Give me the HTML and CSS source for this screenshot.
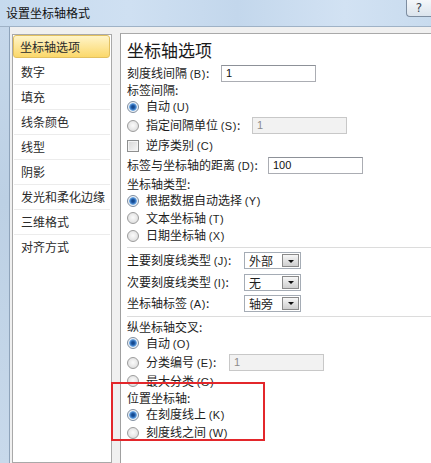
FILE: index.html
```html
<!DOCTYPE html>
<html>
<head>
<meta charset="utf-8">
<title>设置坐标轴格式</title>
<link rel="stylesheet" href="styles.css">
</head>
<body>
<div class="win">
  <div class="titlebar">
    <span class="title">设置坐标轴格式</span>
    <span class="help">?</span>
  </div>
  <div class="main">
    <div class="frame"></div>
    <ul class="nav">
      <li class="item sel">坐标轴选项</li>
      <li class="item">数字</li>
      <li class="item">填充</li>
      <li class="item">线条颜色</li>
      <li class="item">线型</li>
      <li class="item">阴影</li>
      <li class="item">发光和柔化边缘</li>
      <li class="item">三维格式</li>
      <li class="item last">对齐方式</li>
    </ul>
    <div class="panel">
      <div class="heading">坐标轴选项</div>
      <div class="row h18"><span class="lbl w-tick">刻度线间隔 <span class="acc">(B)</span>:</span><span class="input">1</span></div>
      <div class="row h16"><span class="lbl">标签间隔:</span></div>
      <div class="row h17"><span class="radio on"></span><span class="lbl">自动 <span class="acc">(U)</span></span></div>
      <div class="row h21"><span class="radio"></span><span class="lbl w-unit">指定间隔单位 <span class="acc">(S)</span>:</span><span class="input off">1</span></div>
      <div class="row h19"><span class="check"></span><span class="lbl">逆序类别 <span class="acc">(C)</span></span></div>
      <div class="row h21"><span class="lbl w-dist">标签与坐标轴的距离 <span class="acc">(D)</span>:</span><span class="input">100</span></div>
      <div class="row h16"><span class="lbl">坐标轴类型:</span></div>
      <div class="row h17"><span class="radio on"></span><span class="lbl">根据数据自动选择 <span class="acc">(Y)</span></span></div>
      <div class="row h18"><span class="radio"></span><span class="lbl">文本坐标轴 <span class="acc">(T)</span></span></div>
      <div class="row h17"><span class="radio"></span><span class="lbl">日期坐标轴 <span class="acc">(X)</span></span></div>
      <div class="sep"></div>
      <div class="row h21"><span class="lbl w-combo">主要刻度线类型 <span class="acc">(J)</span>:</span><span class="combo"><span class="val">外部</span><span class="btn"><span class="arrow"></span></span></span></div>
      <div class="row h22"><span class="lbl w-combo">次要刻度线类型 <span class="acc">(I)</span>:</span><span class="combo"><span class="val">无</span><span class="btn"><span class="arrow"></span></span></span></div>
      <div class="row h20"><span class="lbl w-combo">坐标轴标签 <span class="acc">(A)</span>:</span><span class="combo"><span class="val">轴旁</span><span class="btn"><span class="arrow"></span></span></span></div>
      <div class="sep"></div>
      <div class="row h15"><span class="lbl">纵坐标轴交叉:</span></div>
      <div class="row h18"><span class="radio on"></span><span class="lbl">自动 <span class="acc">(O)</span></span></div>
      <div class="row h21"><span class="radio"></span><span class="lbl w-cat">分类编号 <span class="acc">(E)</span>:</span><span class="input off">1</span></div>
      <div class="row h16"><span class="radio"></span><span class="lbl">最大分类 <span class="acc">(G)</span></span></div>
      <div class="row h17"><span class="lbl">位置坐标轴:</span></div>
      <div class="row h17"><span class="radio on"></span><span class="lbl">在刻度线上 <span class="acc">(K)</span></span></div>
      <div class="row h19"><span class="radio"></span><span class="lbl">刻度线之间 <span class="acc">(W)</span></span></div>
    </div>
  </div>
  <div class="highlight"></div>
</div>
</body>
</html>
```

FILE: styles.css
```css
* { box-sizing: border-box; }
html, body { margin: 0; padding: 0; }
body {
  width: 431px;
  height: 463px;
  overflow: hidden;
  font-family: "Noto Sans CJK SC", "Noto Sans", sans-serif;
  font-size: 12px;
  color: #1e1e1e;
  background: #f0f0f0;
}
.win { position: relative; width: 431px; height: 463px; overflow: hidden; }

.titlebar {
  height: 27px;
  display: flex;
  align-items: flex-start;
  background: linear-gradient(90deg, #c6daee 0%, #cfe0f2 30%, #c3d7ec 55%, #d2e2f3 80%, #c8dbee 100%);
  border-bottom: 1px solid #9fb2c6;
}
.title {
  padding-left: 6px;
  line-height: 26px;
  font-size: 12px;
  color: #111;
}
.help {
  margin-left: auto;
  width: 25px;
  height: 17px;
  border: 1px solid #7d8da0;
  border-top: none;
  border-right: none;
  border-radius: 0 0 0 4px;
  background: linear-gradient(#f4f7fa, #dbe4ed);
  font-family: "DejaVu Sans", sans-serif;
  font-size: 12px;
  line-height: 16px;
  text-align: center;
  color: #3a4450;
}

.main {
  display: flex;
  height: 436px;
  padding-top: 6px;
}
.frame {
  width: 10px;
  margin-top: -6px;
  background: linear-gradient(#c5d7ea, #bcd0e4 40%, #c8d9eb);
  border-right: 1px solid #8ea3ba;
  flex: none;
}
.nav {
  list-style: none;
  margin: 1px 0 0 2px;
  padding: 0;
  width: 100px;
  flex: none;
  background: #fff;
  border: 1px solid #a9a9a9;
}
.item {
  height: 25px;
  line-height: 24px;
  padding-left: 7px;
  margin-right: 1px;
  margin-left: 1px;
  border-bottom: 1px solid #ececec;
  white-space: nowrap;
  color: #2a2a2a;
}
.item.last { border-bottom: none; }
.item.sel {
  height: 23px;
  line-height: 21px;
  margin: 0 1px 2px 0;
  padding-left: 6px;
  border: 1px solid #e2c060;
  border-radius: 3px;
  background: linear-gradient(#fff4c8, #fde69a 50%, #fbd86a);
}

.panel {
  flex: 1;
  margin-left: 8px;
  background: #fff;
  border-left: 1px solid #a0a0a0;
  border-top: 1px solid #a9a9a9;
  padding-left: 6px;
}
.heading {
  height: 30px;
  font-size: 17px;
  line-height: 31px;
  color: #1a1a1a;
}
.row {
  display: flex;
  align-items: center;
  white-space: nowrap;
}
.h15 { height: 15px; }
.h16 { height: 16px; }
.h17 { height: 17px; }
.h18 { height: 18px; }
.h19 { height: 19px; }
.h20 { height: 20px; }
.h21 { height: 21px; }
.h22 { height: 22px; }
.h23 { height: 23px; }

.lbl { line-height: 14px; flex: none; }
.acc { font-family: "Liberation Sans", sans-serif; font-size: 11px; letter-spacing: 0.5px; }
.w-tick { width: 94px; }
.w-unit { width: 106px; }
.w-dist { width: 141px; }
.w-cat { width: 83px; }
.w-combo { width: 117px; }

.radio {
  width: 12px;
  height: 12px;
  margin-right: 7px;
  flex: none;
  border-radius: 50%;
  border: 1px solid #9c9c9c;
  background: radial-gradient(circle at 50% 45%, #fbfbfb 0, #e9e9e9 50%, #d4d4d4 100%);
}
.radio.on {
  border-color: #7f8ea0;
  background: radial-gradient(circle at 50% 50%, #0f3f7e 0, #1f5aa6 1.8px, #5f9ee0 3.4px, #cfe1f3 4px, #f2f5f8 4.6px, #dcdcdc 100%);
}
.check {
  width: 12px;
  height: 12px;
  margin-right: 7px;
  flex: none;
  border: 1px solid #8e8f8f;
  background: linear-gradient(135deg, #d6d6d6, #f7f7f7);
  box-shadow: inset 0 0 0 1px #f4f4f4;
}

.input {
  width: 95px;
  height: 17px;
  flex: none;
  border: 1px solid #abadb3;
  border-top-color: #8d9198;
  background: #fff;
  font-family: "Liberation Sans", sans-serif;
  font-size: 11px;
  line-height: 15px;
  padding-left: 4px;
  color: #111;
}
.input.off {
  background: #f2f2f2;
  border-color: #c8c8c8;
  color: #8c8c8c;
}

.sep {
  height: 4px;
  border-bottom: 1px solid #dcdcdc;
  margin-bottom: 2px;
}

.combo {
  width: 57px;
  height: 17px;
  flex: none;
  display: flex;
  border: 1px solid #a5acb5;
  background: #fff;
  padding: 1px;
}
.combo .val {
  flex: 1;
  line-height: 13px;
  padding-left: 3px;
  font-size: 12px;
}
.combo .btn {
  width: 17px;
  flex: none;
  border: 1px solid #8a8a8a;
  background: linear-gradient(#f7f7f7, #e2e2e2 50%, #cfcfcf);
  display: flex;
  align-items: center;
  justify-content: center;
}
.arrow {
  width: 0;
  height: 0;
  border-left: 3px solid transparent;
  border-right: 3px solid transparent;
  border-top: 3px solid #111;
  margin-top: 1px;
}

.highlight {
  position: absolute;
  left: 111px;
  top: 382px;
  width: 154px;
  height: 59px;
  border: 2px solid #e3272b;
}
```
